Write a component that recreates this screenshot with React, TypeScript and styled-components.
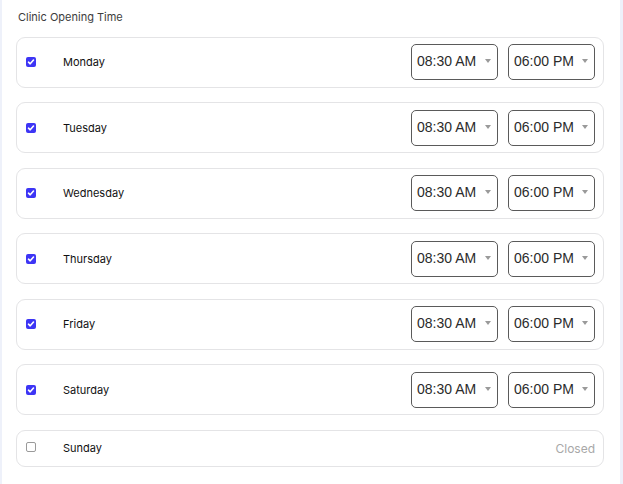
import React from "react";
import styled, { createGlobalStyle } from "styled-components";

const Global = createGlobalStyle`
  html, body { margin: 0; padding: 0; background: #eef1fa; }
  body { font-family: Inter, "Noto Sans", sans-serif; }
`;

const Panel = styled.div`
  margin-left: 2px;
  width: 617.5px;
  min-height: 484px;
  background: #ffffff;
  box-sizing: border-box;
  padding: 10px 16px 0 14px;
`;

const Title = styled.div`
  font-size: 11px;
  color: #3d3d3d;
  line-height: 14px;
  margin-bottom: 12.5px;
  padding-left: 2px;
`;

const List = styled.div`
  display: flex;
  flex-direction: column;
  gap: 14.5px;
`;

const Row = styled.div<{ $closed?: boolean }>`
  display: flex;
  align-items: center;
  height: ${(p) => (p.$closed ? 37 : 51)}px;
  box-sizing: border-box;
  border: 1px solid #e4e4e6;
  border-radius: 9px;
  padding: 0 7.5px 0 9px;
`;

const Check = styled.span<{ $on: boolean }>`
  width: 10px;
  height: 10px;
  box-sizing: border-box;
  border-radius: 2px;
  display: inline-flex;
  align-items: center;
  justify-content: center;
  background: ${(p) => (p.$on ? "#3d35f5" : "#fff")};
  border: ${(p) => (p.$on ? "none" : "1px solid #9a9a9a")};
  margin-top: ${(p) => (p.$on ? "0" : "-2px")};
`;

const Day = styled.span`
  margin-left: 27px;
  font-size: 11px;
  color: #111;
  flex: 1;
`;

const Select = styled.div`
  width: 87px;
  height: 36px;
  box-sizing: border-box;
  border: 1px solid #5a5a5a;
  border-radius: 5px;
  display: flex;
  align-items: center;
  padding: 0 0 0 5px;
  margin-left: 10px;
  font-family: "Liberation Sans", Arial, sans-serif;
  font-size: 14px;
  color: #2b2b2b;
`;

const SelectText = styled.span`
  flex: 1;
  margin-top: -2px;
`;

const Arrow = styled.span`
  width: 0;
  height: 0;
  border-left: 3.5px solid transparent;
  border-right: 3.5px solid transparent;
  border-top: 4px solid #9a9a9a;
  margin-right: 6px;
  margin-top: -2px;
`;

const Closed = styled.span`
  font-size: 12px;
  color: #a8a8a8;
`;

const CheckMark = () => (
  <svg width="8" height="8" viewBox="0 0 8 8">
    <path d="M1.5 4.2 L3.2 5.8 L6.5 2" stroke="#fff" strokeWidth="1.6" fill="none" strokeLinecap="round" strokeLinejoin="round" />
  </svg>
);

const days = ["Monday", "Tuesday", "Wednesday", "Thursday", "Friday", "Saturday"];

export default function App() {
  return (
    <>
      <Global />
      <Panel>
        <Title>Clinic Opening Time</Title>
        <List>
          {days.map((d) => (
            <Row key={d}>
              <Check $on>
                <CheckMark />
              </Check>
              <Day>{d}</Day>
              <Select>
                <SelectText>08:30 AM</SelectText>
                <Arrow />
              </Select>
              <Select>
                <SelectText>06:00 PM</SelectText>
                <Arrow />
              </Select>
            </Row>
          ))}
          <Row $closed>
            <Check $on={false} />
            <Day>Sunday</Day>
            <Closed>Closed</Closed>
          </Row>
        </List>
      </Panel>
    </>
  );
}
